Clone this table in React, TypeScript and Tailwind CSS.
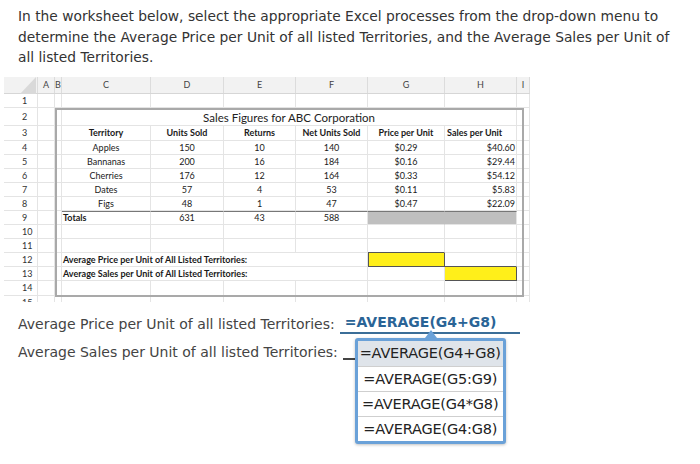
import React from 'react';

const GRID_COLS = 'grid-cols-[34px_17px_7px_89px_73px_72px_72px_77px_72px_13px]';

const data: [string, string, string, string, string, string][] = [
  ['Apples', '150', '10', '140', '$0.29', '$40.60'],
  ['Bannanas', '200', '16', '184', '$0.16', '$29.44'],
  ['Cherries', '176', '12', '164', '$0.33', '$54.12'],
  ['Dates', '57', '4', '53', '$0.11', '$5.83'],
  ['Figs', '48', '1', '47', '$0.47', '$22.09'],
];

function Cell({ className = '', children }: { className?: string; children?: React.ReactNode }) {
  return (
    <div className={`flex items-center border-r border-b border-[#e4e4e4] leading-none overflow-visible whitespace-nowrap ${className}`}>
      {children}
    </div>
  );
}

function RowNum({ n }: { n: string }) {
  return <Cell className="pl-[18px] text-[9px] text-[#333]">{n}</Cell>;
}

function Blank({ count }: { count: number }) {
  return (
    <>
      {Array.from({ length: count }).map((_, i) => (
        <Cell key={i} />
      ))}
    </>
  );
}

function Sheet() {
  const heads = ['A', 'B', 'C', 'D', 'E', 'F', 'G', 'H', 'I'];
  return (
    <div className="relative ml-[4px] w-[526px] h-[225px] overflow-hidden font-['Lato'] text-[#1a1a1a]">
      {/* column header row */}
      <div className={`grid ${GRID_COLS} h-[17px] bg-[#f2f2f2] border-b border-[#d6d6d6]`}>
        <div className="relative border-r border-[#dcdcdc]">
          <svg className="absolute left-[16px] top-0" width="16" height="17" viewBox="0 0 16 17">
            <polygon points="16,0 16,17 0,17" fill="#d9d9d9" />
          </svg>
        </div>
        {heads.map((h) => (
          <div key={h} className="flex items-center justify-center border-r border-[#dcdcdc] text-[9px] text-[#444]">
            {h}
          </div>
        ))}
      </div>

      <div
        className={`grid ${GRID_COLS} grid-rows-[14px_18px_15px_14px_14px_14px_14px_14px_14px_14px_14px_14px_14px_15px_14px]`}
      >
        {/* row 1 */}
        <RowNum n="1" />
        <Blank count={9} />

        {/* row 2 */}
        <RowNum n="2" />
        <Blank count={2} />
        <Cell className="col-span-6 justify-center text-[11.5px] text-[#222] pt-[3px]">Sales Figures for ABC Corporation</Cell>
        <Cell />

        {/* row 3 */}
        <RowNum n="3" />
        <Blank count={2} />
        <Cell className="justify-center text-[9px] font-bold">Territory</Cell>
        <Cell className="justify-center text-[9px] font-bold">Units Sold</Cell>
        <Cell className="justify-center text-[9px] font-bold">Returns</Cell>
        <Cell className="justify-center text-[9px] font-bold">Net Units Sold</Cell>
        <Cell className="justify-center text-[9px] font-bold">Price per Unit</Cell>
        <Cell className="pl-[2px] text-[9px] font-bold">Sales per Unit</Cell>
        <Cell />

        {/* rows 4-8 */}
        {data.map((r, i) => (
          <React.Fragment key={r[0]}>
            <RowNum n={String(i + 4)} />
            <Blank count={2} />
            <Cell className="justify-center text-[9px]">{r[0]}</Cell>
            <Cell className="justify-center text-[9px]">{r[1]}</Cell>
            <Cell className="justify-center text-[9px]">{r[2]}</Cell>
            <Cell className="justify-center text-[9px]">{r[3]}</Cell>
            <Cell className="justify-center text-[9px]">{r[4]}</Cell>
            <Cell className="justify-end pr-[1px] text-[9px]">{r[5]}</Cell>
            <Cell />
          </React.Fragment>
        ))}

        {/* row 9 */}
        <RowNum n="9" />
        <Blank count={2} />
        <Cell className="pl-[1px] text-[9px] font-bold border-t border-t-[#777]">Totals</Cell>
        <Cell className="justify-center text-[9px] border-t border-t-[#777]">631</Cell>
        <Cell className="justify-center text-[9px] border-t border-t-[#777]">43</Cell>
        <Cell className="justify-center text-[9px] border-t border-t-[#777]">588</Cell>
        <Cell className="bg-[#bfbfbf] border-t border-t-[#777] border-r-[#bfbfbf]" />
        <Cell className="bg-[#bfbfbf] border-t border-t-[#777]" />
        <Cell />

        {/* rows 10, 11 */}
        <RowNum n="10" />
        <Blank count={9} />
        <RowNum n="11" />
        <Blank count={6} />
        <Cell className="border-b-[#555]" />
        <Blank count={2} />

        {/* row 12 */}
        <RowNum n="12" />
        <Blank count={2} />
        <Cell className="col-span-4 pl-[1px] text-[9px] font-bold">Average Price per Unit of All Listed Territories:</Cell>
        <Cell className="bg-[#ffef1a] border-r-[#555] border-b-[#555] border-l border-l-[#555]" />
        <Cell className="border-b-[#555]" />
        <Cell />

        {/* row 13 */}
        <RowNum n="13" />
        <Blank count={2} />
        <Cell className="col-span-4 pl-[1px] text-[9px] font-bold">Average Sales per Unit of All Listed Territories:</Cell>
        <Cell />
        <Cell className="bg-[#ffef1a] border-r-[#555] border-b-[#555]" />
        <Cell />

        {/* row 14, 15 */}
        <RowNum n="14" />
        <Blank count={9} />
        <RowNum n="15" />
        <Blank count={9} />
      </div>

      {/* drawn frame around the table */}
      <div className="absolute left-[51px] top-[31px] w-[469px] h-[189px] border-2 border-[#a9a9a9] pointer-events-none" />
    </div>
  );
}

const options = ['=AVERAGE(G4+G8)', '=AVERAGE(G5:G9)', '=AVERAGE(G4*G8)', '=AVERAGE(G4:G8)'];

export default function App() {
  return (
    <div className="w-[700px] h-[464px] overflow-hidden bg-white font-['DejaVu_Sans',sans-serif] text-[#333]">
      <p className="pl-[18px] pr-[20px] pt-[6px] text-[13.8px] leading-[20.5px]">
        In the worksheet below, select the appropriate Excel processes from the drop-down menu to determine the Average
        Price per Unit of all listed Territories, and the Average Sales per Unit of all listed Territories.
      </p>

      <div className="mt-[9px]">
        <Sheet />
      </div>

      <div className="pl-[18px] pt-[10px] text-[14px] text-[#444]">
        <div className="flex items-end h-[22px]">
          <span className="leading-[20px]">Average Price per Unit of all listed Territories:</span>
          <span className="relative ml-[5px] w-[180px] h-[22px] border-b-2 border-[#3b6e98] pl-[5px] font-bold text-[#2a6496] leading-[20px]">
            =AVERAGE(G4+G8)
            <div className="absolute left-[15px] top-[calc(100%+6px)] w-[151px] rounded-[3px] border-[3px] border-[#6aa1d8] bg-white font-normal text-[#222] shadow-[0_1px_3px_rgba(0,0,0,0.25)]">
              <svg className="absolute left-[67px] top-[-11px]" width="12" height="8" viewBox="0 0 12 8">
                <polygon points="0,8 6,0 12,8" fill="#6aa1d8" />
              </svg>
              {options.map((o, i) => (
                <div
                  key={o}
                  className={`flex h-[25px] items-center justify-center text-[14.5px] tracking-[-0.2px] ${i === 0 ? 'bg-[#dfe4ea]' : 'border-t border-[#cfcfcf]'}`}
                >
                  {o}
                </div>
              ))}
            </div>
          </span>
        </div>
        <div className="flex items-end mt-[6px] h-[22px]">
          <span className="leading-[20px]">Average Sales per Unit of all listed Territories:</span>
          <span className="ml-[5px] mb-[2px] w-[16px] border-b-2 border-[#444]" />
        </div>
      </div>
    </div>
  );
}
